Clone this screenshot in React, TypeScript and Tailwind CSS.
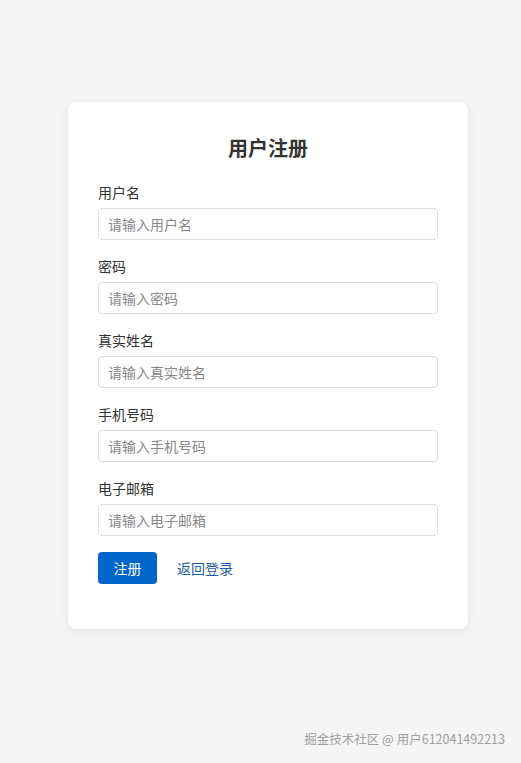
const fields = [
  { label: "用户名", placeholder: "请输入用户名", type: "text" },
  { label: "密码", placeholder: "请输入密码", type: "password" },
  { label: "真实姓名", placeholder: "请输入真实姓名", type: "text" },
  { label: "手机号码", placeholder: "请输入手机号码", type: "text" },
  { label: "电子邮箱", placeholder: "请输入电子邮箱", type: "email" },
];

const App: React.FC = () => {
  return (
    <div
      className="relative min-h-[763px] bg-[#f5f5f5] pt-[102px]"
      style={{ fontFamily: '"Noto Sans CJK SC", "Noto Sans", sans-serif' }}
    >
      {/* card */}
      <div className="ml-[68px] w-[400px] rounded-lg bg-white px-[30px] pt-[30px] pb-[45px] shadow-[0_2px_8px_rgba(0,0,0,0.08)]">
        <h2 className="mb-[18px] text-center text-[20px] font-bold leading-[32px] text-[#333]">
          用户注册
        </h2>

        {fields.map((f) => (
          <div key={f.label} className="mb-4">
            <label className="mb-[5px] block text-sm leading-[21px] text-[#333]">
              {f.label}
            </label>
            <input
              type={f.type}
              placeholder={f.placeholder}
              className="block h-8 w-full rounded border border-[#ddd] px-[9px] text-sm text-[#333] outline-none placeholder:text-[#888]"
            />
          </div>
        ))}

        {/* buttons */}
        <div className="flex items-center gap-5">
          <button className="h-8 w-[59px] rounded bg-[#0066cc] text-sm text-white">
            注册
          </button>
          <a href="#" className="text-sm text-[#1a5ea8]">
            返回登录
          </a>
        </div>
      </div>

      <div className="absolute right-[16px] bottom-[14px] text-[12.5px] text-[#a0a0a0]">
        掘金技术社区 @ 用户612041492213
      </div>
    </div>
  );
};

export default App;
